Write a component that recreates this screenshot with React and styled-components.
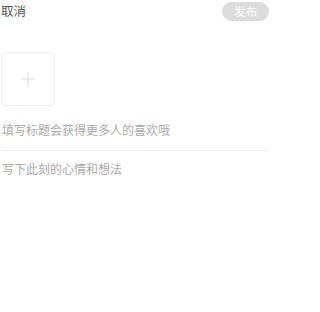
import React from "react";
import styled, { createGlobalStyle } from "styled-components";

const Global = createGlobalStyle`
  html, body { margin: 0; padding: 0; background: #fff; }
  body { font-family: "Noto Sans CJK SC", "Noto Sans", sans-serif; }
`;

const Page = styled.div`
  width: 270px;
  height: 312px;
  box-sizing: border-box;
  padding: 0 2px 0 1px;
  display: flex;
  flex-direction: column;
  background: #fff;
`;

const Header = styled.div`
  display: flex;
  align-items: center;
  justify-content: space-between;
  height: 21px;
  padding-top: 1px;
`;

const Cancel = styled.span`
  font-size: 12.5px;
  line-height: 14px;
  color: #555;
  margin-top: -1px;
`;

const Publish = styled.button`
  width: 47px;
  height: 19px;
  border: none;
  border-radius: 10px;
  background: #dcdcdc;
  color: #fff;
  font-family: inherit;
  font-size: 11.5px;
  line-height: 19px;
  padding: 0;
  margin-right: -1px;
`;

const Upload = styled.div`
  margin-top: 30px;
  width: 54px;
  height: 54px;
  box-sizing: border-box;
  border: 1px solid #eee;
  border-radius: 4px;
  display: flex;
  align-items: center;
  justify-content: center;
`;

const Field = styled.div`
  font-size: 12px;
  line-height: 14px;
  color: #aaa;
  padding-left: 1px;
  margin-top: ${(p) => p.$top}px;
`;

const Divider = styled.div`
  height: 1px;
  background: #efefef;
  margin-top: 13px;
`;

export default function App() {
  return (
    <Page>
      <Global />
      <Header>
        <Cancel>取消</Cancel>
        <Publish>发布</Publish>
      </Header>
      <Upload>
        <svg width="14" height="14" viewBox="0 0 14 14">
          <path d="M7 0V14M0 7H14" stroke="#ddd" strokeWidth="1" />
        </svg>
      </Upload>
      <Field $top={17}>填写标题会获得更多人的喜欢哦</Field>
      <Divider />
      <Field $top={11}>写下此刻的心情和想法</Field>
    </Page>
  );
}
